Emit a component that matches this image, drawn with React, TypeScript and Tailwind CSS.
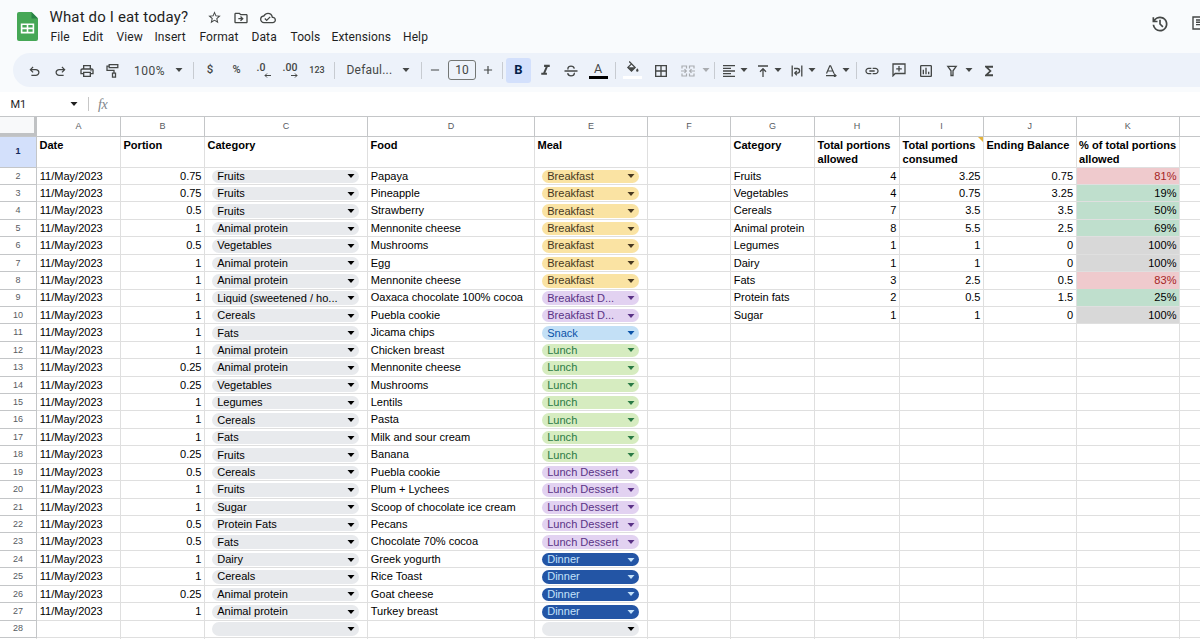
import React from "react";
import {
  MdOutlinePrint, MdStarBorder, MdOutlineDriveFileMove, MdOutlineCloudDone, MdBorderAll,
  MdFormatAlignLeft, MdLink, MdFormatItalic,
  MdFunctions, MdOutlineInsertChart, MdRemove, MdAdd,
} from "react-icons/md";

const columns = "grid grid-cols-[37px_84px_84px_163px_167px_113px_83px_84px_85px_84px_92.6px_103.4px_40px]";

type Entry = [string, string, string, string];
const entries: Entry[] = [
  ["0.75", "Fruits", "Papaya", "Breakfast"],
  ["0.75", "Fruits", "Pineapple", "Breakfast"],
  ["0.5", "Fruits", "Strawberry", "Breakfast"],
  ["1", "Animal protein", "Mennonite cheese", "Breakfast"],
  ["0.5", "Vegetables", "Mushrooms", "Breakfast"],
  ["1", "Animal protein", "Egg", "Breakfast"],
  ["1", "Animal protein", "Mennonite cheese", "Breakfast"],
  ["1", "Liquid (sweetened / ho...", "Oaxaca chocolate 100% cocoa", "Breakfast D..."],
  ["1", "Cereals", "Puebla cookie", "Breakfast D..."],
  ["1", "Fats", "Jicama chips", "Snack"],
  ["1", "Animal protein", "Chicken breast", "Lunch"],
  ["0.25", "Animal protein", "Mennonite cheese", "Lunch"],
  ["0.25", "Vegetables", "Mushrooms", "Lunch"],
  ["1", "Legumes", "Lentils", "Lunch"],
  ["1", "Cereals", "Pasta", "Lunch"],
  ["1", "Fats", "Milk and sour cream", "Lunch"],
  ["0.25", "Fruits", "Banana", "Lunch"],
  ["0.5", "Cereals", "Puebla cookie", "Lunch Dessert"],
  ["1", "Fruits", "Plum + Lychees", "Lunch Dessert"],
  ["1", "Sugar", "Scoop of chocolate ice cream", "Lunch Dessert"],
  ["0.5", "Protein Fats", "Pecans", "Lunch Dessert"],
  ["0.5", "Fats", "Chocolate 70% cocoa", "Lunch Dessert"],
  ["1", "Dairy", "Greek yogurth", "Dinner"],
  ["1", "Cereals", "Rice Toast", "Dinner"],
  ["0.25", "Animal protein", "Goat cheese", "Dinner"],
  ["1", "Animal protein", "Turkey breast", "Dinner"],
];

const totals: string[][] = [
  ["Fruits", "4", "3.25", "0.75", "81%"],
  ["Vegetables", "4", "0.75", "3.25", "19%"],
  ["Cereals", "7", "3.5", "3.5", "50%"],
  ["Animal protein", "8", "5.5", "2.5", "69%"],
  ["Legumes", "1", "1", "0", "100%"],
  ["Dairy", "1", "1", "0", "100%"],
  ["Fats", "3", "2.5", "0.5", "83%"],
  ["Protein fats", "2", "0.5", "1.5", "25%"],
  ["Sugar", "1", "1", "0", "100%"],
];

const mealColor: Record<string, string> = {
  Breakfast: "bg-[#fae3a3] text-[#473821]",
  "Breakfast D...": "bg-[#e2d2f1] text-[#5a3286]",
  Snack: "bg-[#c3e0f6] text-[#0a53a8]",
  Lunch: "bg-[#d6ecc0] text-[#2a7a45]",
  "Lunch Dessert": "bg-[#e2d2f1] text-[#5a3286]",
  Dinner: "bg-[#2355a5] text-[#c4e2fb]",
};

function percentColor(v: string) {
  if (v === "100%") return "bg-[#d8d8d8]";
  if (v === "81%" || v === "83%") return "bg-[#efcacd] text-[#a5241f]";
  return "bg-[#bfdfcd]";
}

function Caret({ className = "" }: { className?: string }) {
  return (
    <svg viewBox="0 0 8 4" className={`h-[4px] w-[8px] shrink-0 ${className}`} fill="currentColor">
      <path d="M0.5 0h7L4 4z" />
    </svg>
  );
}

function Chip({ text, color }: { text: string; color: string }) {
  return (
    <div className={`ml-[7.4px] mr-[8px] mt-[2px] flex h-[13.5px] items-center justify-between rounded-full pl-[4.8px] pr-[4.4px] ${color}`}>
      <span className="leading-[13px]">{text}</span>
      <Caret />
    </div>
  );
}

function Cell({ children, right = false, className = "" }: { children?: React.ReactNode; right?: boolean; className?: string }) {
  return (
    <div className={`overflow-hidden whitespace-nowrap border-b border-r border-[#dfdfdf] leading-[17.5px] ${right ? "pr-[2.5px] text-right" : "pl-[2.7px]"} ${className}`}>
      {children}
    </div>
  );
}

function ChipCell({ children }: { children: React.ReactNode }) {
  return <div className="overflow-hidden whitespace-nowrap border-b border-r border-[#dfdfdf]">{children}</div>;
}

function Tool({ children, className }: { children: React.ReactNode; className: string }) {
  return <div className={`flex shrink-0 items-center justify-center ${className}`}>{children}</div>;
}

function Sep({ className }: { className: string }) {
  return (
    <div className={`flex shrink-0 justify-center ${className}`}>
      <div className="h-[17px] w-px bg-[#c7cbd1]" />
    </div>
  );
}

function Symbol({ d, className }: { d: string; className: string }) {
  return (
    <svg viewBox="0 -960 960 960" fill="currentColor" className={className}>
      <path d={d} />
    </svg>
  );
}

const undoPath = "M280-200v-80h284q63 0 109.5-40T720-420q0-60-46.5-100T564-560H312l104 104-56 56-200-200 200-200 56 56-104 104h252q97 0 169.5 63T800-420q0 94-72.5 157T564-200H280Z";
const historyPath = "M480-120q-138 0-240.5-91.5T122-440h82q14 104 92.5 172T480-200q117 0 198.5-81.5T760-480q0-117-81.5-198.5T480-760q-69 0-129 32t-101 88h110v80H120v-240h80v94q51-64 124.5-99T480-840q75 0 140.5 28.5t114 77q48.5 48.5 77 114T840-480q0 75-28.5 140.5t-77 114q-48.5 48.5-114 77T480-120Zm112-192L440-464v-216h80v184l128 128-56 56Z";

function Toolbar() {
  return (
    <div className="mt-[5px] ml-[13px] flex h-[34px] items-center overflow-hidden rounded-l-full bg-[#edf2fa] pl-[8px] font-[Roboto,sans-serif] text-[#444746]">
      <Tool className="w-[26px] pt-[2px]"><Symbol d={undoPath} className="size-[15px]" /></Tool>
      <Tool className="w-[27px] pt-[2px]"><Symbol d={undoPath} className="size-[15px] -scale-x-100" /></Tool>
      <Tool className="w-[26px] pt-px"><MdOutlinePrint size={16} /></Tool>
      <Tool className="w-[26px] pt-px">
        <svg viewBox="0 0 14 16" className="h-[16px] w-[14px]" fill="none" stroke="currentColor" strokeWidth="1.3">
          <path d="M3.2 1.7h8.6v3H3.2zM3.2 3.1H1v4.2h7v2.8M6.5 10.2h3v4h-3z" />
        </svg>
      </Tool>
      <div className="w-[44px] shrink-0 pt-px pl-[8px] text-[12px] tracking-[0.5px]">100%</div>
      <Tool className="w-[18px]"><Caret className="w-[7px]" /></Tool>
      <Sep className="w-[10px]" />
      <Tool className="w-[24px] text-[11.5px] font-medium">$</Tool>
      <Tool className="w-[29px] text-[11px] font-medium">%</Tool>
      <Tool className="w-[25px]">
        <div className="relative h-[15px] w-[14px] text-[10.5px] font-medium leading-[10px]">.0
          <svg viewBox="0 0 7 5" className="absolute right-0 bottom-0 h-[5px] w-[7px]" fill="none" stroke="currentColor"><path d="M7 2.5H1M3 .5l-2 2 2 2" /></svg>
        </div>
      </Tool>
      <Tool className="w-[28px]">
        <div className="relative h-[15px] w-[15px] text-[10.5px] font-medium leading-[10px]">.00
          <svg viewBox="0 0 7 5" className="absolute right-0 bottom-0 h-[5px] w-[7px]" fill="none" stroke="currentColor"><path d="M0 2.5h6M4 .5l2 2-2 2" /></svg>
        </div>
      </Tool>
      <Tool className="w-[26px] pt-px text-[9px] font-medium">123</Tool>
      <Sep className="w-[8px]" />
      <div className="w-[58px] shrink-0 pl-[8.5px] text-[12px] tracking-[0.2px]">Defaul...</div>
      <Tool className="w-[20px]"><Caret className="w-[7px]" /></Tool>
      <Sep className="w-[11px]" />
      <Tool className="w-[16px]"><MdRemove size={14} /></Tool>
      <Tool className="ml-[5px] h-[20px] w-[28px] rounded-[3px] border border-[#747775] text-[12px]">10</Tool>
      <Tool className="ml-[4px] w-[16px]"><MdAdd size={14} /></Tool>
      <Sep className="w-[10px] pl-[2px]" />
      <Tool className="h-[25px] w-[25px] rounded-[3px] bg-[#d3e0fc] text-[13px] font-bold text-[#041e49]">B</Tool>
      <Tool className="w-[28px] pt-px"><MdFormatItalic size={17} /></Tool>
      <Tool className="w-[24px] pt-px">
        <svg viewBox="0 0 14 12" className="h-[12px] w-[14px]" fill="none" stroke="currentColor" strokeWidth="1.3">
          <path d="M.5 6h13M10.3 3.6C10 2 8.8 1.2 7 1.2S3.900 2 3.900 3.500c0 .4.1.7.3 1M3.700 8.200C3.900 9.900 5.200 10.800 7 10.800s3.300-.8 3.300-2.300c0-.3 0-.5-.1-.7" />
        </svg>
      </Tool>
      <Tool className="w-[30px] pt-px">
        <div className="flex h-[16px] w-[19px] flex-col items-center justify-between">
          <span className="text-[12.5px] leading-[11px]">A</span>
          <div className="h-[3px] w-full bg-black" />
        </div>
      </Tool>
      <Sep className="w-[5px]" />
      <Tool className="w-[28px]">
        <div className="flex h-[18px] w-[19px] flex-col items-center justify-between">
          <svg viewBox="0 0 13 12" className="h-[12px] w-[13px]">
            <path d="M3.2.5l6 6-3.7 3.7L1.800 6.500 5.500 2.800" fill="none" stroke="currentColor" strokeWidth="1.2" />
            <path d="M1.800 6.300h7.400L5.500 10.200z" fill="currentColor" />
            <path d="M11.300 7.300c.8 1 1.200 1.600 1.200 2.200a1.200 1.200 0 0 1-2.400 0c0-.6.4-1.200 1.200-2.200z" fill="currentColor" />
          </svg>
          <div className="h-[3px] w-full shrink-0 bg-white" />
        </div>
      </Tool>
      <Tool className="w-[29px] pt-px"><MdBorderAll size={16} /></Tool>
      <Tool className="w-[26px] pt-px text-[#a9acb0]">
        <svg viewBox="0 0 14 12" className="h-[12px] w-[14px]" fill="none" stroke="currentColor" strokeWidth="1.2">
          <path d="M1 3.5V1h4.5v2.5M8.5 3.5V1H13v2.5M1 8.5V11h4.5V8.5M8.5 8.5V11H13V8.5M0 6h5M3.5 4.2L5.3 6 3.5 7.8M14 6H9M10.5 4.2L8.7 6l1.8 1.8" />
        </svg>
      </Tool>
      <Tool className="w-[10px] text-[#a9acb0]"><Caret className="w-[7px]" /></Tool>
      <Sep className="w-[7px]" />
      <Tool className="w-[22px] pt-px"><MdFormatAlignLeft size={16} /></Tool>
      <Tool className="w-[8px]"><Caret className="w-[7px]" /></Tool>
      <Tool className="ml-[5px] w-[20px] pt-px">
        <svg viewBox="0 0 12 12" className="size-[12px]" fill="none" stroke="currentColor" strokeWidth="1.3"><path d="M1 1h10M6 12V4M3 6.7l3-3 3 3" /></svg>
      </Tool>
      <Tool className="w-[10px]"><Caret className="w-[7px]" /></Tool>
      <Tool className="ml-[4px] w-[20px] pt-px">
        <svg viewBox="0 0 12 12" className="size-[12px]" fill="none" stroke="currentColor" strokeWidth="1.3"><path d="M1.2.5v11M10.8.5v11M3 3.5h3.3a2.2 2.2 0 0 1 0 4.6H4M5.8 6L3.8 8.1l2 2.1" /></svg>
      </Tool>
      <Tool className="w-[10px]"><Caret className="w-[7px]" /></Tool>
      <Tool className="ml-[4px] w-[20px] pt-px">
        <svg viewBox="0 0 12 12" className="size-[12px]" fill="none" stroke="currentColor" strokeWidth="1.2"><path d="M1.5 8.5L4.8.8h.8L9 8.5M2.7 6h5M1 10.6h9.5M9 8.8l2 1.8-2 1.6" /></svg>
      </Tool>
      <Tool className="w-[10px]"><Caret className="w-[7px]" /></Tool>
      <Sep className="w-[10px]" />
      <Tool className="w-[22px] pt-px"><MdLink size={16} /></Tool>
      <Tool className="w-[32px]">
        <svg viewBox="0 0 14 14" className="size-[14px]" fill="none" stroke="currentColor" strokeWidth="1.3"><path d="M1 12.8V1h12v9.5H3.2zM7 3v5.6M4.2 5.8h5.6" /></svg>
      </Tool>
      <Tool className="w-[21px] pt-px"><MdOutlineInsertChart size={16} /></Tool>
      <Tool className="ml-[5px] w-[22px] pt-px">
        <svg viewBox="0 0 12 12" className="size-[12px]" fill="none" stroke="currentColor" strokeWidth="1.3"><path d="M1.8 1.3h8.4L7 5.8v4.7H5V5.8z" /></svg>
      </Tool>
      <Tool className="w-[12px]"><Caret className="w-[7px]" /></Tool>
      <Tool className="ml-[2px] w-[24px] pt-px"><MdFunctions size={16} /></Tool>
    </div>
  );
}

function Header() {
  return (
    <div className="h-[92px] overflow-hidden bg-[#f9fbfd]">
      <div className="flex h-[48px] font-[Roboto,sans-serif]">
        <svg viewBox="0 0 21 29" className="mt-[12px] ml-[17px] h-[29px] w-[21px] shrink-0">
          <path d="M2 0h12.5L21 6.5V27a2 2 0 0 1-2 2H2a2 2 0 0 1-2-2V2a2 2 0 0 1 2-2z" fill="#46a756" />
          <path d="M14.5 0L21 6.5h-6.5z" fill="#288245" />
          <path d="M3.8 11.5h13.4v10H3.8zM5.4 13v2.6h4.3V13zm5.9 0v2.6h4.3V13zm-5.9 4.2v2.6h4.3v-2.6zm5.9 0v2.6h4.3v-2.6z" fill="#fff" fillRule="evenodd" />
        </svg>
        <div className="ml-[11.5px] grow">
          <div className="mt-[7px] flex h-[20px] items-center text-[#444746]">
            <span className="w-[157.5px] whitespace-nowrap text-[15px] tracking-[0.15px] text-[#1f1f1f]">What do I eat today?</span>
            <MdStarBorder size={15} className="mt-px" />
            <MdOutlineDriveFileMove size={16} className="mt-px ml-[11px]" />
            <MdOutlineCloudDone size={16} className="mt-px ml-[11px]" />
          </div>
          <div className="mt-[1px] flex h-[18px] items-center gap-[13px] pl-[1px] text-[12px] tracking-[0.1px] text-[#1f1f1f]">
            <span className="w-[19px]">File</span><span className="w-[21px]">Edit</span><span className="w-[25px]">View</span>
            <span className="w-[32px]">Insert</span><span className="w-[39px]">Format</span><span className="w-[26px]">Data</span>
            <span className="w-[28px]">Tools</span><span className="w-[58.5px]">Extensions</span><span>Help</span>
          </div>
        </div>
        <div className="mt-[14px] flex w-[50px] shrink-0 items-start overflow-hidden text-[#444746]">
          <Symbol d={historyPath} className="size-[20px] shrink-0" />
          <svg viewBox="0 0 16 14" className="mt-[2px] ml-[22px] h-[14px] w-[16px] shrink-0" fill="none" stroke="currentColor" strokeWidth="1.4"><path d="M1 1h14v12H1zM4 4h8M4 6.3h8M4 8.6h8" /></svg>
        </div>
      </div>
      <Toolbar />
    </div>
  );
}

export default function App() {
  return (
    <div className="h-[639px] w-[1200px] overflow-hidden bg-white">
      <Header />
      <div className="flex h-[24px] items-center font-[Roboto,sans-serif] text-[11px] text-[#1f1f1f]">
        <span className="w-[70px] pt-[2px] pl-[10.5px]">M1</span>
        <Caret className="w-[7px]" />
        <div className="ml-[10px] h-[14px] w-px bg-[#c7c7c7]" />
        <span className="ml-[9px] font-['Liberation_Serif',serif] text-[14px] italic tracking-[-0.5px] text-[#80868b]">fx</span>
      </div>
      <div className="w-[1200px] overflow-hidden font-['Liberation_Sans',Arial,sans-serif] text-[11.05px] text-black">
        <div className={`${columns} h-[21px] w-[1220px] border-y border-[#c4c6c8] text-center text-[9px] leading-[19px] text-[#575b5f]`}>
          <div className="border-r-[3px] border-b-[3px] border-[#c0c2c4] bg-[#f8f9fa]" />
          {"ABCDEFGHIJK".split("").map((c) => (
            <div key={c} className="border-r border-[#c4c6c8]">{c}</div>
          ))}
          <div />
        </div>
        <div className={`${columns} h-[30.5px] font-bold`}>
          <div className="border-r border-b border-[#c4c6c8] bg-[#d3e0fb] text-center text-[9px] leading-[29px] text-[#12295c]">1</div>
          {["Date", "Portion", "Category", "Food", "Meal", "", "Category", "Total portions allowed", "Total portions consumed", "Ending Balance", "% of total portions allowed", ""].map((h, i) => (
            <div key={i} className="relative border-r border-b border-[#dfdfdf] pt-[2.4px] pl-[2.5px] text-[11.05px] leading-[13.3px]">
              {h}
              {i === 8 && <div className="absolute top-0 right-0 border-t-[5px] border-l-[5px] border-t-[#e5b43c] border-l-transparent" />}
            </div>
          ))}
        </div>
        {[...entries, null].map((e, i) => {
          const t = totals[i];
          return (
            <div key={i} className={`${columns} h-[17.43px]`}>
              <div className="border-r border-b border-[#c4c6c8] text-center text-[9px] leading-[16.5px] text-[#575b5f]">{i + 2}</div>
              <Cell>{e && "11/May/2023"}</Cell>
              <Cell right>{e?.[0]}</Cell>
              <ChipCell><Chip text={e?.[1] ?? ""} color="bg-[#e8eaed]" /></ChipCell>
              <Cell>{e?.[2]}</Cell>
              <ChipCell><Chip text={e?.[3] ?? ""} color={e ? mealColor[e[3]] : "bg-[#e8eaed]"} /></ChipCell>
              <Cell />
              <Cell>{t?.[0]}</Cell>
              <Cell right>{t?.[1]}</Cell>
              <Cell right>{t?.[2]}</Cell>
              <Cell right>{t?.[3]}</Cell>
              <Cell right className={t ? percentColor(t[4]) : ""}>{t?.[4]}</Cell>
              <Cell />
            </div>
          );
        })}
        <div className={`${columns} h-[17px]`}>
          {Array.from({ length: 13 }, (_, i) => <div key={i} className="border-r border-[#dfdfdf]" />)}
        </div>
      </div>
    </div>
  );
}
